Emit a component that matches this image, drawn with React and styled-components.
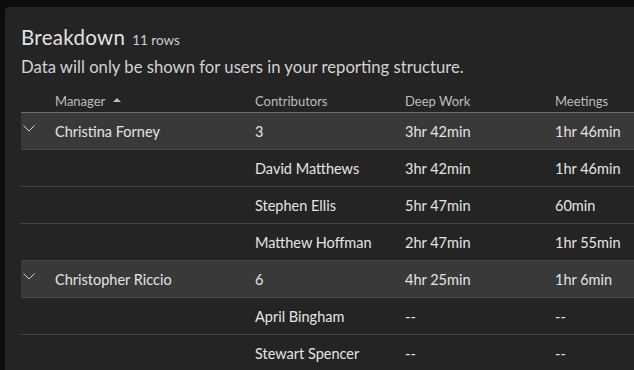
import React from "react";
import styled, { createGlobalStyle } from "styled-components";

const GlobalStyle = createGlobalStyle`
  html, body {
    margin: 0;
    background: #0c0c0c;
    font-family: Lato, "Noto Sans", sans-serif;
    overflow: hidden;
  }
`;

const Card = styled.section`
  margin: 7px 0 0 5px;
  padding: 18px 0 0 16px;
  height: 400px;
  background: #242424;
  border-radius: 4px 0 0 0;
  overflow: hidden;
`;

const TitleRow = styled.div`
  display: flex;
  align-items: baseline;
  gap: 7px;
  color: #e2e2e2;
`;

const Title = styled.h2`
  margin: 0;
  font-size: 20.5px;
  font-weight: 400;
  line-height: 24px;
  letter-spacing: 0.3px;
`;

const Count = styled.span`
  font-size: 13.5px;
  color: #cfcfcf;
`;

const Subtitle = styled.p`
  margin: 7px 0 0;
  font-size: 16.7px;
  line-height: 22px;
  color: #d2d2d2;
`;

const Table = styled.div`
  margin-top: 12px;
  width: 700px;
`;

const Row = styled.div`
  display: grid;
  grid-template-columns: 34px 200px 150px 150px 166px;
  align-items: center;
  height: ${(p) => (p.$head ? "22px" : "36px")};
  border-bottom: 1px solid ${(p) => (p.$head ? "#6c6c6c" : "#464646")};
  background: ${(p) => (p.$group ? "#393939" : "transparent")};
  color: ${(p) => (p.$head ? "#bdbdbd" : "#e4e4e4")};
  font-size: ${(p) => (p.$head ? "13px" : "14.5px")};
`;

const Cell = styled.div`
  white-space: nowrap;
  display: flex;
  align-items: center;
  gap: 8px;
`;

const Chevron = styled.svg`
  margin-left: 2px;
  margin-top: -6px;
`;

const SortArrow = styled.span`
  width: 0;
  height: 0;
  border-left: 4px solid transparent;
  border-right: 4px solid transparent;
  border-bottom: 4px solid #bdbdbd;
  margin-top: -2px;
`;

const rows = [
  { group: true, manager: "Christina Forney", c: "3", d: "3hr 42min", m: "1hr 46min" },
  { c: "David Matthews", d: "3hr 42min", m: "1hr 46min" },
  { c: "Stephen Ellis", d: "5hr 47min", m: "60min" },
  { c: "Matthew Hoffman", d: "2hr 47min", m: "1hr 55min" },
  { group: true, manager: "Christopher Riccio", c: "6", d: "4hr 25min", m: "1hr 6min" },
  { c: "April Bingham", d: "--", m: "--" },
  { c: "Stewart Spencer", d: "--", m: "--" },
];

export default function App() {
  return (
    <>
      <GlobalStyle />
      <Card>
        <TitleRow>
          <Title>Breakdown</Title>
          <Count>11 rows</Count>
        </TitleRow>
        <Subtitle>Data will only be shown for users in your reporting structure.</Subtitle>
        <Table>
          <Row $head>
            <Cell />
            <Cell>
              Manager <SortArrow />
            </Cell>
            <Cell>Contributors</Cell>
            <Cell>Deep Work</Cell>
            <Cell>Meetings</Cell>
          </Row>
          {rows.map((r, i) => (
            <Row key={i} $group={r.group}>
              <Cell>
                {r.group && (
                  <Chevron width="12" height="7" viewBox="0 0 12 7">
                    <path d="M0.5 0.5 L6 6 L11.5 0.5" fill="none" stroke="#d0d0d0" strokeWidth="1" />
                  </Chevron>
                )}
              </Cell>
              <Cell>{r.manager}</Cell>
              <Cell>{r.c}</Cell>
              <Cell>{r.d}</Cell>
              <Cell>{r.m}</Cell>
            </Row>
          ))}
        </Table>
      </Card>
    </>
  );
}
